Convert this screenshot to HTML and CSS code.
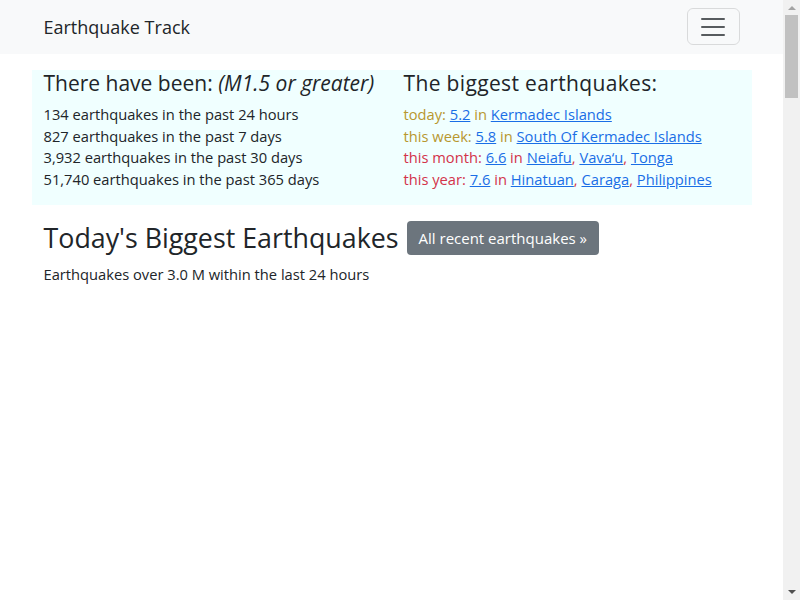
FILE: index.html
```html
<!DOCTYPE html>
<html lang="en">
<head>
<meta charset="utf-8">
<title>Earthquake Track</title>
<link rel="stylesheet" href="styles.css">
</head>
<body>
<div class="page">
<nav class="navbar">
  <div class="container nav-inner">
    <a class="brand" href="#">Earthquake Track</a>
    <button class="toggler" type="button" aria-label="Toggle navigation">
      <svg width="30" height="30" viewBox="0 0 30 30"><path d="M4 7h22M4 15h22M4 23h22" stroke="rgba(33,37,41,0.75)" stroke-width="2" stroke-linecap="round" fill="none"/></svg>
    </button>
  </div>
</nav>
<main class="container">
  <section class="summary">
    <div class="col">
      <h4 class="sum-title">There have been: <em>(M1.5 or greater)</em></h4>
      <p class="lines">
        134 earthquakes in the past 24 hours<br>
        827 earthquakes in the past 7 days<br>
        3,932 earthquakes in the past 30 days<br>
        51,740 earthquakes in the past 365 days
      </p>
    </div>
    <div class="col">
      <h4 class="sum-title wide">The biggest earthquakes:</h4>
      <p class="lines">
        <span class="warn">today: <a href="#">5.2</a> in <a href="#">Kermadec Islands</a></span><br>
        <span class="warn">this week: <a href="#">5.8</a> in <a href="#">South Of Kermadec Islands</a></span><br>
        <span class="danger">this month: <a href="#">6.6</a> in <a href="#">Neiafu</a>, <a href="#">Vava‘u</a>, <a href="#">Tonga</a></span><br>
        <span class="danger">this year: <a href="#">7.6</a> in <a href="#">Hinatuan</a>, <a href="#">Caraga</a>, <a href="#">Philippines</a></span>
      </p>
    </div>
  </section>
  <section class="today">
    <div class="today-head">
      <h2 class="today-title">Today's Biggest Earthquakes</h2>
      <a class="btn" href="#">All recent earthquakes »</a>
    </div>
    <p class="today-sub">Earthquakes over 3.0 M within the last 24 hours</p>
    <div class="today-list"></div>
  </section>
</main>
</div>
<div class="scrollbar" aria-hidden="true">
  <span class="sb-arrow sb-up"></span>
  <span class="sb-thumb"></span>
  <span class="sb-arrow sb-down"></span>
</div>
</body>
</html>
```
FILE: styles.css
```css
html, body {
  margin: 0;
  padding: 0;
}
body {
  font-family: "Open Sans", "Noto Sans", sans-serif;
  color: #212529;
  background: #fff;
  font-size: 14.7px;
  line-height: 1.47;
}
.page {
  width: 783px;
}
.scrollbar {
  position: fixed;
  top: 0;
  right: 0;
  width: 17px;
  height: 100vh;
  background: #f1f1f1;
  display: flex;
  flex-direction: column;
  align-items: center;
}
.sb-arrow {
  width: 0;
  height: 0;
  border-left: 4px solid transparent;
  border-right: 4px solid transparent;
}
.sb-up {
  margin-top: 6px;
  border-bottom: 4px solid #a3a3a3;
}
.sb-thumb {
  margin-top: 5px;
  width: 13px;
  height: 83px;
  background: #c1c1c1;
}
.sb-down {
  margin-top: auto;
  margin-bottom: 6px;
  border-top: 4px solid #505050;
}
.container {
  max-width: 720px;
  margin: 0 auto;
  padding: 0 12px;
  box-sizing: border-box;
}
.navbar {
  background: #f8f9fa;
  height: 54px;
}
.nav-inner {
  display: flex;
  align-items: center;
  justify-content: space-between;
  height: 54px;
}
.brand {
  font-size: 18px;
  color: #212529;
  text-decoration: none;
}
.toggler {
  width: 53px;
  height: 37px;
  border: 1px solid rgba(0,0,0,0.12);
  border-radius: 6px;
  background: transparent;
  display: flex;
  align-items: center;
  justify-content: center;
  padding: 0;
  margin-top: -1px;
}
main.container {
  padding: 0;
}
.summary {
  margin-top: 16px;
  background: #f0ffff;
  display: grid;
  grid-template-columns: 1fr 1fr;
}
.col {
  padding: 0 12px;
}
.sum-title {
  font-size: 21px;
  font-weight: 400;
  line-height: 1.2;
  margin: 0 0 8px;
  padding-top: 1px;
}
.sum-title.wide {
  letter-spacing: 0.35px;
}
.sum-title + .lines {
  margin: 0 0 14px;
}
.lines a {
  color: #1a6ee6;
}
.warn { color: #b8972f; }
.danger { color: #d3344a; }
.today {
  padding: 0 12px;
}
.today-head {
  display: flex;
  align-items: center;
  gap: 8px;
  margin-top: 16px;
}
.today-title {
  font-size: 26.8px;
  font-weight: 400;
  line-height: 1.2;
  margin: 0;
}
.btn {
  background: #6c757d;
  color: #fff;
  text-decoration: none;
  border-radius: 4px;
  padding: 5px 12px;
  font-size: 15px;
  line-height: 24px;
}
.today-sub {
  margin: 9px 0 0;
}
.today-list {
  height: 3400px;
}
```
